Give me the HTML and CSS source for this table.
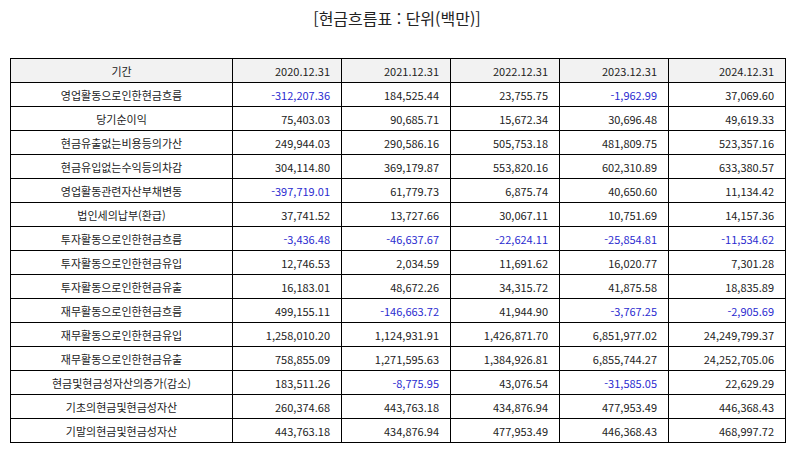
FILE: index.html
```html
<!DOCTYPE html>
<html lang="ko">
<head>
<meta charset="utf-8">
<link rel="stylesheet" href="styles.css">
</head>
<body>
<div class="page">
  <h1 class="title">[현금흐름표 : 단위(백만)]</h1>
  <table class="cf">
    <colgroup>
      <col class="c-name"><col class="c-v"><col class="c-v"><col class="c-v"><col class="c-v"><col class="c-last">
    </colgroup>
    <thead>
      <tr><th class="name">기간</th><th>2020.12.31</th><th>2021.12.31</th><th>2022.12.31</th><th>2023.12.31</th><th>2024.12.31</th></tr>
    </thead>
    <tbody>
      <tr><td class="name">영업활동으로인한현금흐름</td><td class="neg">-312,207.36</td><td>184,525.44</td><td>23,755.75</td><td class="neg">-1,962.99</td><td>37,069.60</td></tr>
      <tr><td class="name">당기순이익</td><td>75,403.03</td><td>90,685.71</td><td>15,672.34</td><td>30,696.48</td><td>49,619.33</td></tr>
      <tr><td class="name">현금유출없는비용등의가산</td><td>249,944.03</td><td>290,586.16</td><td>505,753.18</td><td>481,809.75</td><td>523,357.16</td></tr>
      <tr><td class="name">현금유입없는수익등의차감</td><td>304,114.80</td><td>369,179.87</td><td>553,820.16</td><td>602,310.89</td><td>633,380.57</td></tr>
      <tr><td class="name">영업활동관련자산부채변동</td><td class="neg">-397,719.01</td><td>61,779.73</td><td>6,875.74</td><td>40,650.60</td><td>11,134.42</td></tr>
      <tr><td class="name">법인세의납부(환급)</td><td>37,741.52</td><td>13,727.66</td><td>30,067.11</td><td>10,751.69</td><td>14,157.36</td></tr>
      <tr><td class="name">투자활동으로인한현금흐름</td><td class="neg">-3,436.48</td><td class="neg">-46,637.67</td><td class="neg">-22,624.11</td><td class="neg">-25,854.81</td><td class="neg">-11,534.62</td></tr>
      <tr><td class="name">투자활동으로인한현금유입</td><td>12,746.53</td><td>2,034.59</td><td>11,691.62</td><td>16,020.77</td><td>7,301.28</td></tr>
      <tr><td class="name">투자활동으로인한현금유출</td><td>16,183.01</td><td>48,672.26</td><td>34,315.72</td><td>41,875.58</td><td>18,835.89</td></tr>
      <tr><td class="name">재무활동으로인한현금흐름</td><td>499,155.11</td><td class="neg">-146,663.72</td><td>41,944.90</td><td class="neg">-3,767.25</td><td class="neg">-2,905.69</td></tr>
      <tr><td class="name">재무활동으로인한현금유입</td><td>1,258,010.20</td><td>1,124,931.91</td><td>1,426,871.70</td><td>6,851,977.02</td><td>24,249,799.37</td></tr>
      <tr><td class="name">재무활동으로인한현금유출</td><td>758,855.09</td><td>1,271,595.63</td><td>1,384,926.81</td><td>6,855,744.27</td><td>24,252,705.06</td></tr>
      <tr><td class="name">현금및현금성자산의증가(감소)</td><td>183,511.26</td><td class="neg">-8,775.95</td><td>43,076.54</td><td class="neg">-31,585.05</td><td>22,629.29</td></tr>
      <tr><td class="name">기초의현금및현금성자산</td><td>260,374.68</td><td>443,763.18</td><td>434,876.94</td><td>477,953.49</td><td>446,368.43</td></tr>
      <tr><td class="name">기말의현금및현금성자산</td><td>443,763.18</td><td>434,876.94</td><td>477,953.49</td><td>446,368.43</td><td>468,997.72</td></tr>
    </tbody>
  </table>
</div>
</body>
</html>
```

FILE: styles.css
```css
html, body {
  margin: 0;
  padding: 0;
  background: #ffffff;
}
.page {
  padding: 7px 10px 0 10px;
  font-family: "Noto Sans CJK KR", "Noto Sans", sans-serif;
  color: #222222;
}
.title {
  margin: 0;
  height: 51px;
  font-size: 16px;
  font-weight: normal;
  line-height: 22px;
  text-align: center;
  color: #222222;
}
.cf {
  width: 776px;
  border-collapse: separate;
  border-spacing: 0;
  table-layout: fixed;
  font-size: 11px;
  border-top: 1px solid #000000;
  border-left: 1px solid #000000;
}
.c-name { width: 222px; }
.c-v { width: 109px; }
.c-last { width: 117px; }
.cf th, .cf td {
  border-right: 1px solid #000000;
  border-bottom: 1px solid #000000;
  height: 23px;
  padding: 0 11px 0 4px;
  text-align: right;
  font-weight: normal;
  line-height: 14px;
  white-space: nowrap;
  color: #222222;
}
.cf th {
  background: #f2f2f2;
}
.cf .name {
  text-align: center;
  padding: 0 4px;
}
.cf td.neg {
  color: #2b2bd0;
}
```
